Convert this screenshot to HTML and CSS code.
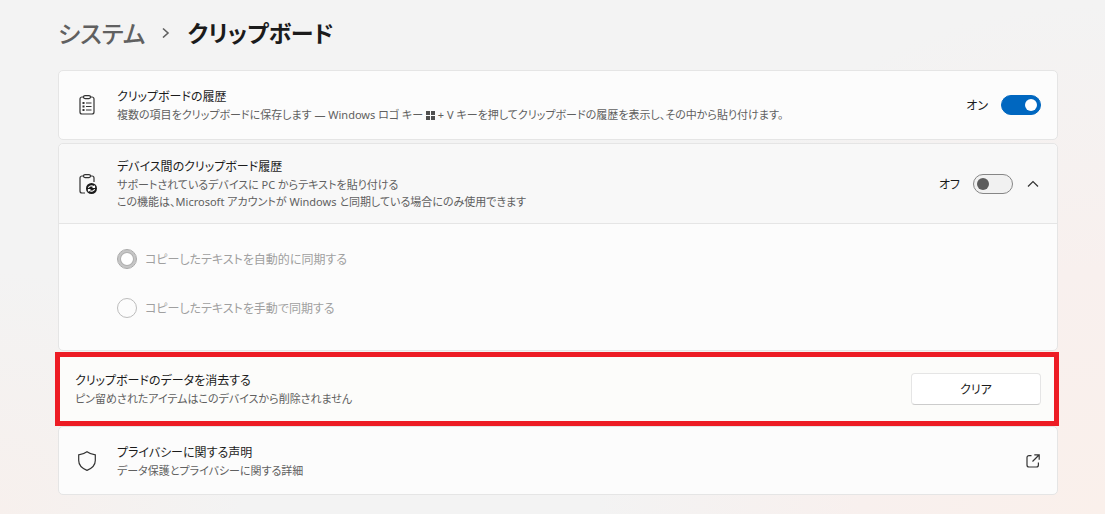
FILE: index.html
```html
<!DOCTYPE html>
<html lang="ja">
<head>
    <meta charset="utf-8">
    <title>クリップボード</title>
    <link rel="stylesheet" href="styles.css">
</head>
<body>
    <nav class="breadcrumb">
        <a href="#system">システム</a>
        <svg width="8" height="12" viewBox="0 0 8 12"><path d="M1 2.500 6 7 1 11.500"/></svg>
        <h1>クリップボード</h1>
    </nav>
    <main>
        <!-- 履歴 -->
        <section class="card row">
            <svg class="icon" width="20" height="20" viewBox="0 0 20 20">
                <path d="M7 2H5a2 2 0 0 0-2 2v13a2 2 0 0 0 2 2h10a2 2 0 0 0 2-2V4a2 2 0 0 0-2-2h-2"/>
                <rect x="6.500" y=".6" width="7" height="3" rx="1.500"/>
                <path d="M9 8h5.500M9 11.500h5.500M9 15h5.500"/>
                <path class="dots" d="M5.500 8h2M5.500 11.500h2M5.500 15h2"/>
            </svg>
            <div class="text">
                <label class="title" for="history">クリップボードの履歴</label>
                <p>複数の項目をクリップボードに保存します — Windows ロゴ キー <svg class="win" width="9" height="9" viewBox="0 0 9 9"><path d="M0 0h4v4H0zM5 0h4v4H5zM0 5h4v4H0zM5 5h4v4H5z"/></svg> + V キーを押してクリップボードの履歴を表示し、その中から貼り付けます。</p>
            </div>
            <span class="state">オン</span>
            <input type="checkbox" class="toggle" id="history" checked>
        </section>
        <!-- 同期 -->
        <section class="card">
            <div class="row head">
                <svg class="icon" width="20" height="20" viewBox="0 0 20 20">
                    <path d="M7 2H5a2 2 0 0 0-2 2v13a2 2 0 0 0 2 2h3M13 2h2a2 2 0 0 1 2 2v4"/>
                    <rect x="6.500" y=".6" width="7" height="3" rx="1.500"/>
                    <circle class="fill" cx="14.500" cy="14.500" r="5.500"/>
                    <path class="sync" d="M11.500 14a3 2.500 0 0 1 5-1.500l1 1M17.500 11.500v2h-2M17.500 15a3 2.500 0 0 1-5 1.500l-1-1M11.500 17.500v-2h2"/>
                </svg>
                <div class="text">
                    <label class="title" for="sync">デバイス間のクリップボード履歴</label>
                    <p>サポートされているデバイスに PC からテキストを貼り付ける<br>この機能は、Microsoft アカウントが Windows と同期している場合にのみ使用できます</p>
                </div>
                <span class="state">オフ</span>
                <input type="checkbox" class="toggle" id="sync">
                <button class="expand" aria-label="折りたたむ">
                    <svg width="12" height="8" viewBox="0 0 12 8"><path d="M1 6.500 6 1.500l5 5"/></svg>
                </button>
            </div>
            <div class="options">
                <label><input type="radio" name="mode" checked disabled>コピーしたテキストを自動的に同期する</label>
                <label><input type="radio" name="mode" disabled>コピーしたテキストを手動で同期する</label>
            </div>
        </section>
        <!-- 消去 -->
        <section class="row marked">
            <div class="text">
                <span class="title">クリップボードのデータを消去する</span>
                <p>ピン留めされたアイテムはこのデバイスから削除されません</p>
            </div>
            <button class="clear">クリア</button>
        </section>
        <!-- プライバシー -->
        <a class="card row" href="#privacy">
            <svg class="icon" width="20" height="20" viewBox="0 0 20 20">
                <path d="M10 .8C12.500 2.600 15 3.600 18.300 3.800V9.500c0 4.800-3.300 7.800-8.300 9.900C5 17.300 1.700 14.300 1.700 9.500V3.800C5 3.600 7.500 2.600 10 .8z"/>
            </svg>
            <div class="text">
                <span class="title">プライバシーに関する声明</span>
                <p>データ保護とプライバシーに関する詳細</p>
            </div>
            <svg class="open" width="14" height="14" viewBox="0 0 14 14">
                <path d="M5.500 1.600H3a2 2 0 0 0-2 2V11a2 2 0 0 0 2 2h7.400a2 2 0 0 0 2-2V8.500M8.300 .8H13.200V5.700M13 1 6.500 7.500"/>
            </svg>
        </a>
    </main>
</body>
</html>
```

FILE: styles.css
```css
* {
    box-sizing: border-box;
}
body {
    margin: 0;
    padding: 10px 47px 15px 58px;
    min-height: 100vh;
    color: #1b1b1b;
    background:
        radial-gradient(circle at 100% 100%, #faf0eb 0, #f8f0ee 20%, transparent 42%),
        radial-gradient(circle at 0 100%, #f7f0ed 0, transparent 20%),
        #f3f3f3;
    font-family: "Noto Sans", "Noto Sans CJK JP", sans-serif;
    font-feature-settings: "palt";
    font-size: 12px;
}
svg {
    flex: none;
    fill: none;
    stroke: #333;
    stroke-width: 1.2;
}
a {
    color: inherit;
    text-decoration: none;
}
p {
    margin: 0;
    color: #606060;
    font-size: 11px;
    line-height: 17px;
}
.breadcrumb {
    display: flex;
    align-items: center;
    height: 44px;
    margin-bottom: 16px;
    gap: 17px;
    font-size: 24px;
    font-weight: 500;
}
.breadcrumb a {
    color: #606060;
}
.breadcrumb svg {
    stroke: #606060;
    stroke-width: 1.6;
}
h1 {
    margin: 0;
    font-size: 23px;
    font-weight: 600;
}
.card {
    background: #fcfcfc;
    border: 1px solid #e5e5e5;
    border-radius: 5px;
    margin-bottom: 3px;
}
.row {
    display: flex;
    align-items: center;
    min-height: 70px;
    padding: 0 16px 0 18px;
}
.head {
    min-height: 80px;
    background: #f8f8f8;
    border-bottom: 1px solid #e5e5e5;
    border-radius: 5px 5px 0 0;
}
.icon {
    margin-right: 20px;
}
.text {
    flex: 1;
}
.title {
    display: block;
    line-height: 19px;
}
.dots {
    stroke-width: 2;
}
.win {
    fill: #505050;
    stroke: none;
    vertical-align: -1px;
}
.fill {
    fill: #1b1b1b;
    stroke: none;
}
.sync {
    stroke: #fff;
}
.toggle {
    appearance: none;
    flex: none;
    display: flex;
    align-items: center;
    width: 40px;
    height: 20px;
    margin: 0 0 0 13px;
    padding: 0 3px;
    border: 1px solid #868686;
    border-radius: 10px;
    background: #f1f1f1;
}
.toggle::before {
    content: "";
    width: 12px;
    height: 12px;
    border-radius: 50%;
    background: #5c5c5c;
}
.toggle:checked {
    justify-content: flex-end;
    background: #0067c0;
    border-color: #0067c0;
}
.toggle:checked::before {
    background: #fff;
}
.expand {
    display: flex;
    margin: 0 2px 0 14px;
    padding: 0;
    border: 0;
    background: none;
}
.open {
    margin-right: 1px;
}
.options {
    display: flex;
    flex-direction: column;
    gap: 29px;
    padding: 25px 58px 32px;
    color: #a0a0a0;
}
.options label {
    display: flex;
    align-items: center;
    gap: 8px;
    height: 20px;
}
.options input {
    appearance: none;
    width: 20px;
    height: 20px;
    margin: 0;
    border: 1px solid #bcbcbc;
    border-radius: 50%;
}
.options input:checked {
    border-color: #a8a8a8;
    background: #fff;
    box-shadow: inset 0 0 0 2px #c6c6c6, inset 0 0 0 3px #b0b0b0;
}
.marked {
    min-height: 74px;
    margin: -2px -1px 0 -3px;
    padding: 0 13px 0 15px;
    border: 5px solid #ed1c24;
    background: #fcfcfa;
}
.marked + .card {
    min-height: 69px;
}
.clear {
    width: 130px;
    height: 32px;
    padding: 0;
    border: 1px solid #e5e5e5;
    border-bottom-color: #ccc;
    border-radius: 4px;
    background: #fff;
    color: inherit;
    font: inherit;
}
```
